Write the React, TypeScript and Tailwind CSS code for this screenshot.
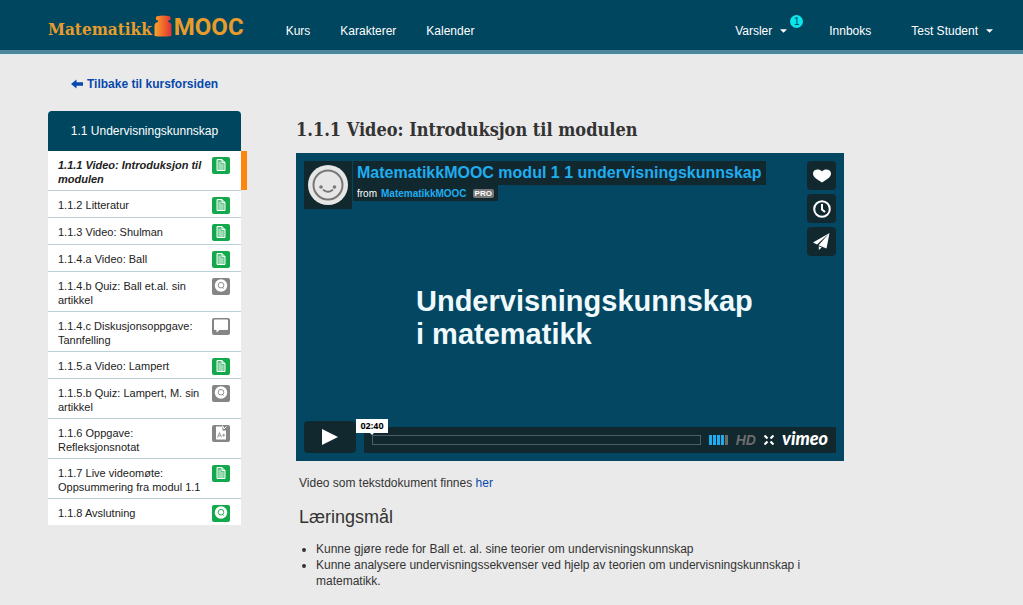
import { useState } from "react";
import clsx from "clsx";

type Kind = "page" | "quiz" | "discussion" | "assignment";

interface Item {
  title: string;
  kind: Kind;
  done: boolean;
}

const items: Item[] = [
  { title: "1.1.1 Video: Introduksjon til modulen", kind: "page", done: true },
  { title: "1.1.2 Litteratur", kind: "page", done: true },
  { title: "1.1.3 Video: Shulman", kind: "page", done: true },
  { title: "1.1.4.a Video: Ball", kind: "page", done: true },
  { title: "1.1.4.b Quiz: Ball et.al. sin artikkel", kind: "quiz", done: false },
  { title: "1.1.4.c Diskusjonsoppgave: Tannfelling", kind: "discussion", done: false },
  { title: "1.1.5.a Video: Lampert", kind: "page", done: true },
  { title: "1.1.5.b Quiz: Lampert, M. sin artikkel", kind: "quiz", done: false },
  { title: "1.1.6 Oppgave: Refleksjonsnotat", kind: "assignment", done: false },
  { title: "1.1.7 Live videomøte: Oppsummering fra modul 1.1", kind: "page", done: true },
  { title: "1.1.8 Avslutning", kind: "quiz", done: true },
];

function ItemIcon({ kind, done }: { kind: Kind; done: boolean }) {
  const color = done ? "#12a84b" : "#858585";
  return (
    <svg viewBox="0 0 18 17" className="w-[18px] h-[17px] shrink-0" fill="none">
      <rect width="18" height="17" rx="2" fill={color} />
      {kind === "page" && (
        <>
          <path d="M5 2.500h5L13 5.500V13.500H5z" fill="#5cc483" stroke="#fff" />
          <path d="M10 2.500v3h3" stroke="#fff" />
          <path d="M6.500 6h2.500M6.500 8h5M6.500 10h5M6.500 12h5" stroke="#fff" strokeWidth="0.8" />
        </>
      )}
      {kind === "quiz" && (
        <>
          <circle cx="9" cy="7.500" r="6.200" fill="#fff" />
          <circle cx="9" cy="7.200" r="2.800" stroke={color} strokeWidth="0.9" />
          <path d="M10 9l1.700 1.500" stroke={color} strokeWidth="0.9" />
        </>
      )}
      {kind === "discussion" && (
        <path d="M3 1.500h12a1 1 0 0 1 1 1V11a1 1 0 0 1-1 1H7.500l-3 2.500V12H3a1 1 0 0 1-1-1V2.500a1 1 0 0 1 1-1z" fill="#fff" />
      )}
      {kind === "assignment" && (
        <>
          <path d="M4 1.500h6.500v4H14V14.500H4z" fill="#fff" />
          <path d="M10.500 0.500l1.500 3.500 2.500-2.500" stroke="#fff" />
          <path d="M5.500 12.500l2-5 2 5M6.200 10.800h2.500M10.200 10.200h3M11.700 8.700v3" stroke={color} strokeWidth="0.8" />
        </>
      )}
    </svg>
  );
}

function Caret() {
  return (
    <svg viewBox="0 0 8 4" className="w-[7px] h-1" fill="currentColor">
      <path d="M0 0h8L4 4z" />
    </svg>
  );
}

function Logo() {
  return (
    <a href="#" className="flex items-end text-[#e89c2b] h-6">
      <span className="font-['DejaVu_Serif_Condensed','DejaVu_Serif',serif] font-bold text-[17px] leading-4">
        Matematikk
      </span>
      <svg viewBox="0 0 18 22" className="w-[18px] h-[22px] mx-0.5" fill="none">
        <defs>
          <linearGradient id="weight">
            <stop offset="0" stopColor="#f6a22d" />
            <stop offset="0.5" stopColor="#f06a2b" />
            <stop offset="1" stopColor="#dd3434" />
          </linearGradient>
        </defs>
        <path
          d="M4 1q5-1 10.500 0a1.500 1.500 0 0 1 0 4.500q-1 1 0 1.500 2.500.5 3 3V21q-9 1-17 0V10q.5-2.500 3-3 1-.5.5-1.500a1.500 1.500 0 0 1 0-4.500z"
          fill="url(#weight)"
        />
      </svg>
      <span className="font-[Roboto,sans-serif] font-bold text-2xl leading-5">MOOC</span>
    </a>
  );
}

function Header() {
  return (
    <header className="bg-[#00465f] border-b-4 border-[#4c879c] shadow-[0_1px_0_#dbeaee] text-white text-xs">
      <div className="flex items-center h-[50px] pl-12 pr-[30px]">
        <Logo />
        <nav className="flex flex-1 items-center pt-3 pl-[42px]">
          <a href="#">Kurs</a>
          <a href="#" className="ml-[30px]">Karakterer</a>
          <a href="#" className="ml-[30px]">Kalender</a>
          <button className="relative ml-auto flex items-center gap-2">
            Varsler <Caret />
            <span className="absolute -right-4 -top-2 size-[13px] rounded-full bg-[#0ce6ea] text-[#00465f] text-[10px] leading-[13px] text-center">
              1
            </span>
          </button>
          <a href="#" className="ml-[42px]">Innboks</a>
          <button className="ml-10 flex items-center gap-2">
            Test Student <Caret />
          </button>
        </nav>
      </div>
    </header>
  );
}

function Sidebar() {
  const [active, setActive] = useState(0);

  return (
    <aside className="w-[193px] shrink-0">
      <a href="#" className="flex items-center gap-1 pl-[23px] h-4 font-bold text-xs text-[#0748ad]">
        <svg viewBox="0 0 12 10" className="w-3 h-2.5" fill="currentColor">
          <path d="M0 5l5.500-4.500V3.200H12v3.600H5.500v2.700z" />
        </svg>
        Tilbake til kursforsiden
      </a>
      <h2 className="mt-[19px] h-10 rounded-t bg-[#00465f] text-white text-xs leading-10 text-center">
        1.1 Undervisningskunnskap
      </h2>
      <ul className="bg-white">
        {items.map((item, i) => (
          <li key={item.title} className="border-b border-[#bccfd6] last:border-b-0">
            <button
              onClick={() => setActive(i)}
              className={clsx(
                "relative flex w-full min-h-[26px] items-start justify-between pl-2.5 pr-[11px] pt-[7px] pb-1 text-left text-[11px] leading-[14px] text-[#222]",
                i === active && "font-bold italic"
              )}
            >
              <span className="w-[149px]">{item.title}</span>
              <span className="-mt-px h-3">
                <ItemIcon kind={item.kind} done={item.done} />
              </span>
              {i === active && <span className="absolute -right-1.5 inset-y-0 w-1.5 bg-[#ff860d]" />}
            </button>
          </li>
        ))}
      </ul>
    </aside>
  );
}

function VideoPlayer() {
  const sideButton = "flex size-[29px] items-center justify-center rounded bg-[#12282f]";

  return (
    <div className="relative aspect-[548/308] bg-[#034763] text-white">
      <div className="absolute left-2 top-2 flex items-start">
        <div className="size-12 bg-[#12282f] p-1">
          <svg viewBox="0 0 40 40" className="size-10" fill="none">
            <circle cx="20" cy="20" r="20" fill="#e6e6e6" />
            <circle cx="20" cy="20" r="14.500" stroke="#777" strokeWidth="2" />
            <circle cx="13" cy="22" r="1.800" fill="#777" />
            <circle cx="26.500" cy="22" r="1.800" fill="#777" />
            <path d="M15.500 25q4.500 3.500 9 0" stroke="#777" strokeWidth="1.800" strokeLinecap="round" />
          </svg>
        </div>
        <div className="ml-px flex flex-col items-start">
          <h3 className="h-6 whitespace-nowrap bg-[#12282f] px-1 text-base leading-6 font-bold text-[#1fadf0]">
            MatematikkMOOC modul 1 1 undervisningskunnskap
          </h3>
          <p className="flex h-4 items-center gap-1 bg-[#12282f] px-1 text-[10px]">
            from
            <a href="#" className="font-bold text-[#1fadf0]">MatematikkMOOC</a>
            <span className="ml-0.5 rounded-xs bg-[#777] px-0.5 text-[8px] leading-[9px] font-bold">PRO</span>
          </p>
        </div>
      </div>

      <div className="absolute right-2 top-2 flex flex-col gap-1">
        <button aria-label="Lik" className={sideButton}>
          <svg viewBox="0 0 18 14" className="w-[18px] h-3.5" fill="currentColor">
            <path d="M9 13.500C5 11 0 8.500 0 4.500 0 .5 6-1 9 2.500 12-1 18 .5 18 4.500c0 4-5 6.500-9 9z" />
          </svg>
        </button>
        <button aria-label="Se senere" className={sideButton}>
          <svg viewBox="0 0 18 18" className="size-[18px]" fill="none" stroke="currentColor" strokeWidth="2">
            <circle cx="9" cy="9" r="7.800" />
            <path d="M9 4v5.500l3 2.500" />
          </svg>
        </button>
        <button aria-label="Del" className={sideButton}>
          <svg viewBox="0 0 17 17" className="size-[17px]" fill="currentColor">
            <path d="M16.500 0L0 9.500l4 2zM16.500 0L5.500 12.200 13.500 15.500zM5.800 13.300l3 1.300-3 2.400z" />
          </svg>
        </button>
      </div>

      <p className="absolute left-[120px] top-[132px] text-[29px] leading-[33px] font-bold text-[#f0f9fc]">
        Undervisningskunnskap
        <br />i matematikk
      </p>

      <div className="absolute inset-x-2 bottom-2 flex items-end gap-2">
        <button aria-label="Spill av" className="flex h-8 w-[52px] items-center justify-center rounded bg-[#12282f]">
          <svg viewBox="0 0 16 16" className="size-4" fill="currentColor">
            <path d="M0 0l16 8-16 8z" />
          </svg>
        </button>
        <div className="relative flex h-[26px] flex-1 items-center bg-[#12282f] px-2">
          <input
            type="range"
            aria-label="Tidslinje"
            defaultValue={0}
            className="h-2.5 min-w-0 flex-1 appearance-none border border-[#4d5e64] [&::-webkit-slider-thumb]:appearance-none"
          />
          <span className="absolute -left-2 -top-2 flex h-3.5 w-8 items-center justify-center bg-white font-['Open_Sans',sans-serif] text-[9px] font-bold text-black">
            02:40
            <span className="absolute top-full border-x-2 border-t-2 border-x-transparent border-t-white" />
          </span>
          <button aria-label="Volum" className="ml-2 flex gap-px">
            <span className="h-2.5 w-[3px] bg-[#1fadf0]" />
            <span className="h-2.5 w-[3px] bg-[#1fadf0]" />
            <span className="h-2.5 w-[3px] bg-[#1fadf0]" />
            <span className="h-2.5 w-[3px] bg-[#1fadf0]" />
            <span className="h-2.5 w-[3px] bg-[#6c6c6c]" />
          </button>
          <button className="ml-2 text-sm leading-4 font-bold italic text-[#6c6c6c]">HD</button>
          <button aria-label="Fullskjerm" className="ml-2">
            <svg viewBox="0 0 10 10" className="size-2.5" fill="none" stroke="currentColor" strokeWidth="2.2">
              <path d="M.500 .500l3 3M9.500 .500l-3 3M.500 9.500l3-3M9.500 9.500l-3-3" />
            </svg>
          </button>
          <a href="#" className="ml-2 pb-1 font-[Lato,sans-serif] text-lg leading-5 font-black italic">
            vimeo
          </a>
        </div>
      </div>
    </div>
  );
}

function App() {
  return (
    <div className="min-h-screen bg-[#eaeaea] font-['Liberation_Sans',Arial,sans-serif] text-[#333]">
      <Header />
      <div className="flex gap-[55px] px-12 pt-[22px]">
        <Sidebar />
        <main className="max-w-[548px] flex-1 pt-10">
          <h1 className="font-['DejaVu_Serif_Condensed','DejaVu_Serif',serif] text-lg leading-7 font-bold">
            1.1.1 Video: Introduksjon til modulen
          </h1>
          <div className="mt-[9px]">
            <VideoPlayer />
          </div>
          <div className="px-[3px] text-xs leading-4">
            <p className="mt-3.5">
              Video som tekstdokument finnes{" "}
              <a href="#" className="text-[#0748ad]">her</a>
            </p>
            <h2 className="mt-3.5 text-lg leading-6">Læringsmål</h2>
            <ul className="mt-3 list-disc pl-[17px]">
              <li>Kunne gjøre rede for Ball et. al. sine teorier om undervisningskunnskap</li>
              <li>
                Kunne analysere undervisningssekvenser ved hjelp av teorien om undervisningskunnskap i
                matematikk.
              </li>
            </ul>
          </div>
        </main>
      </div>
    </div>
  );
}

export default App;
